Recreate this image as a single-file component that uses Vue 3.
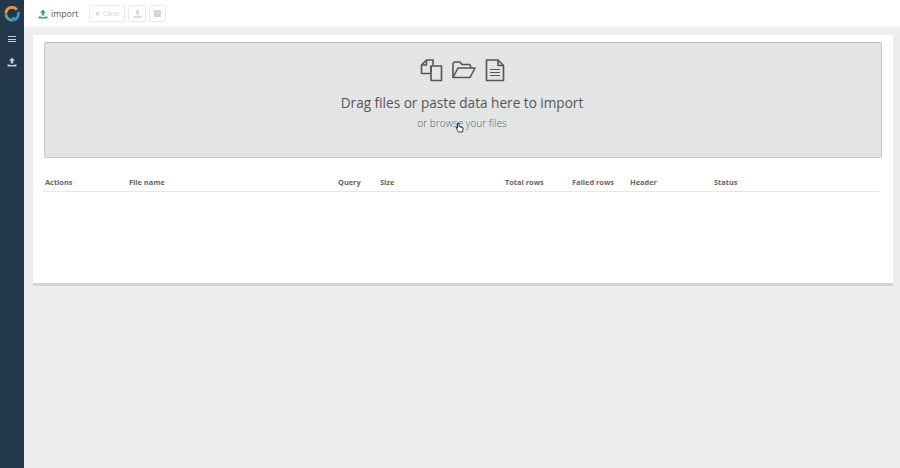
<template>
  <div class="app">
    <aside class="sidebar">
      <div class="sidebar__logo">
        <svg width="16" height="16" viewBox="0 0 16 16" fill="none">
          <path d="M1.9 7 A6.2 6.2 0 0 1 12.8 3.6" stroke="#e8973a" stroke-width="2.8" />
          <path d="M14 6 A6.2 6.2 0 0 1 10.5 13.8 L8.6 11.4" stroke="#2f9bd0" stroke-width="2.8" />
          <path d="M8.8 14.2 A6.2 6.2 0 0 1 1.9 7.5" stroke="#58a88e" stroke-width="2.8" />
        </svg>
      </div>
      <button class="sidebar__btn sidebar__btn--menu">
        <span></span><span></span><span></span>
      </button>
      <button class="sidebar__btn sidebar__btn--upload">
        <svg width="10" height="10" viewBox="0 0 10 10" fill="#c3cad0">
          <path d="M5 0.5 L8 3.7 H6.2 V6.6 H3.8 V3.7 H2 Z M0.5 7.4 H3 V8 H7 V7.4 H9.5 V9.6 H0.5 Z" />
        </svg>
      </button>
    </aside>

    <div class="main">
      <header class="topbar">
        <svg class="topbar__icon" width="10" height="10" viewBox="0 0 10 10" fill="#4a9a90">
          <path d="M5 0.5 L8 3.7 H6.2 V6.6 H3.8 V3.7 H2 Z M0.5 7.4 H3 V8 H7 V7.4 H9.5 V9.6 H0.5 Z" />
        </svg>
        <span class="topbar__title">import</span>
        <div class="topbar__actions">
          <button class="tool tool--text"><span class="tool__x">✖</span> Clear</button>
          <button class="tool">
            <svg width="9" height="9" viewBox="0 0 10 10" fill="#d4d6d6">
              <path d="M5 0.5 L8 3.7 H6.2 V6.6 H3.8 V3.7 H2 Z M0.5 7.4 H3 V8 H7 V7.4 H9.5 V9.6 H0.5 Z" />
            </svg>
          </button>
          <button class="tool tool--stop"><span class="tool__stop"></span></button>
        </div>
      </header>

      <section class="panel">
        <div class="dropzone">
          <div class="dropzone__icons">
            <svg width="23" height="23" viewBox="0 0 23 23" fill="none" stroke="#555" stroke-width="1.6" stroke-linejoin="round">
              <path d="M11 14.5 H1.5 V6 L6.5 1 H13 V6.5" />
              <path d="M6.5 1 V6 H1.5" />
              <path d="M11 7 H21.5 V21.5 H11 Z" />
              <path d="M11 7 V13" />
            </svg>
            <svg width="24" height="18" viewBox="0 0 24 18" fill="none" stroke="#555" stroke-width="1.6" stroke-linejoin="round">
              <path d="M1 16.5 V2.5 L2.5 1 H8 L10 3.5 H17.5 L18.5 4.5 V7" />
              <path d="M1 16.5 L6 7 H23 L18 16.5 Z" />
            </svg>
            <svg width="20" height="23" viewBox="0 0 20 23" fill="none" stroke="#555" stroke-width="1.6" stroke-linejoin="round">
              <path d="M1.5 1 H13 L18.5 6.5 V21.5 H1.5 Z" />
              <path d="M13 1 V6.5 H18.5" />
              <path d="M5 10.5 H15 M5 13.5 H15 M5 16.5 H15" stroke-width="1.2" />
            </svg>
          </div>
          <div class="dropzone__title">Drag files or paste data here to import</div>
          <div class="dropzone__sub">or <a class="dropzone__link">browse your files</a></div>
          <svg class="dropzone__cursor" width="9" height="11" viewBox="0 0 9 11">
            <path d="M2.5 1 V6 L1 5 L2.5 8.5 L3.5 10 H7.5 L8.2 6 L4 4.5 V1 Z" fill="#fff" stroke="#222" stroke-width="0.9" />
          </svg>
        </div>

        <div class="files">
          <div class="files__head">
            <span v-for="col in columns" :key="col.name" :style="{ width: col.width + 'px' }">{{ col.name }}</span>
          </div>
        </div>
      </section>
    </div>
  </div>
</template>

<script setup>
const columns = [
  { name: 'Actions', width: 84 },
  { name: 'File name', width: 209 },
  { name: 'Query', width: 42 },
  { name: 'Size', width: 125 },
  { name: 'Total rows', width: 67 },
  { name: 'Failed rows', width: 58 },
  { name: 'Header', width: 84 },
  { name: 'Status', width: 100 }
]
</script>

<style>
html, body {
  margin: 0;
  background: #eeeeee;
}
</style>

<style scoped>
.app {
  display: flex;
  width: 900px;
  height: 468px;
  overflow: hidden;
  font-family: "Open Sans", sans-serif;
}

.sidebar {
  width: 24px;
  flex-shrink: 0;
  background: #23374d;
  display: flex;
  flex-direction: column;
  align-items: center;
}

.sidebar__logo {
  height: 28px;
  display: flex;
  align-items: center;
  justify-content: center;
}

.sidebar__btn {
  border: 0;
  padding: 0;
  background: none;
  display: flex;
  flex-direction: column;
  align-items: center;
  justify-content: center;
}

.sidebar__btn--menu {
  height: 12px;
  margin-top: 5px;
  gap: 1.5px;
}

.sidebar__btn--menu span {
  display: block;
  width: 8px;
  height: 1px;
  background: #c3cad0;
}

.sidebar__btn--upload {
  margin-top: 11px;
  height: 12px;
}

.main {
  flex: 1;
  min-width: 0;
  display: flex;
  flex-direction: column;
}

.topbar {
  height: 27px;
  background: #fff;
  display: flex;
  align-items: center;
  padding-left: 14px;
  flex-shrink: 0;
}

.topbar__icon {
  margin-right: 3px;
}

.topbar__title {
  font-size: 8.7px;
  color: #555;
  margin-right: 11px;
}

.topbar__actions {
  display: flex;
  gap: 3px;
}

.tool {
  box-sizing: border-box;
  height: 17px;
  width: 18px;
  padding: 0;
  border: 1px solid #eaeaea;
  border-radius: 2px;
  background: #fff;
  display: flex;
  align-items: center;
  justify-content: center;
  font-family: inherit;
  font-size: 7px;
  color: #d4d6d6;
}

.tool--text {
  width: 36px;
  gap: 3px;
}

.tool--stop {
  width: 17px;
}

.tool__x {
  font-size: 6px;
}

.tool__stop {
  width: 7px;
  height: 7px;
  background: #d4d6d6;
}

.panel {
  margin: 8px 7px 0 9px;
  height: 241px;
  padding: 7px 11px 0;
  background: #fff;
  border-bottom: 3px solid #d2d2d2;
}

.dropzone {
  position: relative;
  box-sizing: border-box;
  height: 116px;
  padding-right: 2px;
  background: repeating-linear-gradient(#e1e3e2 0 1px, #e6e8e7 1px 2px);
  border: 1px solid #c4c7c6;
  border-top-color: #b9bcbb;
  border-radius: 2px;
  display: flex;
  flex-direction: column;
  align-items: center;
}

.dropzone__icons {
  display: flex;
  align-items: center;
  gap: 9px;
  margin-top: 15px;
  height: 24px;
}

.dropzone__title {
  margin-top: 11px;
  font-size: 13.6px;
  line-height: 20px;
  color: #555;
}

.dropzone__sub {
  margin-top: 2px;
  font-size: 10.1px;
  line-height: 16px;
  font-weight: 300;
  color: #555;
}

.dropzone__link {
  color: #466a70;
}

.dropzone__cursor {
  position: absolute;
  left: 410px;
  top: 79px;
}

.files {
  margin: 14px 3px 0 0;
}

.files__head {
  display: flex;
  height: 19px;
  align-items: center;
  padding-left: 1px;
  border-bottom: 1px solid #e6e6e6;
  font-size: 7.4px;
  font-weight: 700;
  color: #666;
}
</style>
